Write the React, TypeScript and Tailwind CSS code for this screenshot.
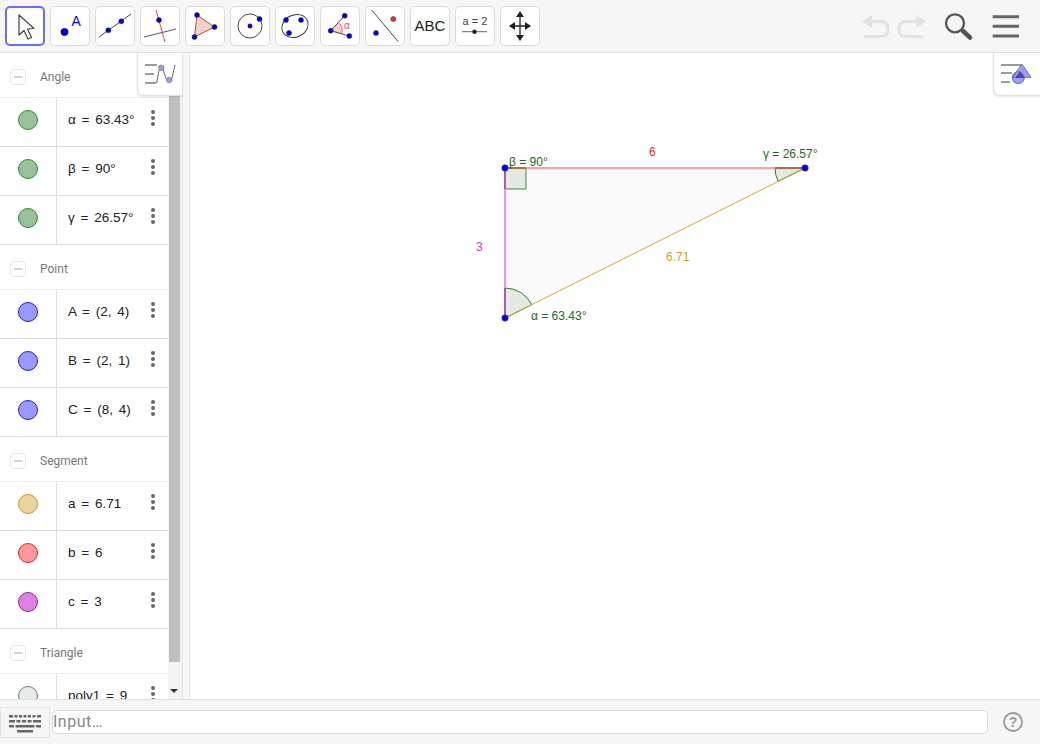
import type { ReactNode } from "react"

const BLUE = "#0000e6"

function Dot({ x, y, r = 2.5, fill = BLUE }: { x: number; y: number; r?: number; fill?: string }) {
  return <circle cx={x} cy={y} r={r} fill={fill} stroke="#222" strokeWidth="0.5" />
}

const tools: ReactNode[] = [
  <path key="move" d="M14 9 L14 29 L19 24.5 L23 33 L26.5 31.5 L22.5 23 L29 22.5 Z" fill="#fff" stroke="#444" strokeWidth="1.2" strokeLinejoin="round" />,
  <g key="point">
    <Dot x={14.5} y={26} r={3.7} />
    <text x={21.5} y={19.5} fill="#0000ff" fontSize="14" fontFamily="Liberation Sans, sans-serif">A</text>
  </g>,
  <g key="line">
    <path d="M4 31 L36 8" stroke="#333" strokeWidth="0.9" />
    <Dot x={13.3} y={24.3} />
    <Dot x={26.3} y={15.3} />
  </g>,
  <g key="perp">
    <path d="M4 31 L36 23" stroke="#444" strokeWidth="0.9" />
    <path d="M16 4 L25 36" stroke="#f03030" strokeWidth="0.9" />
    <Dot x={19} y={14} />
  </g>,
  <g key="polygon">
    <path d="M12 9 L29.5 21 L9.5 31 Z" fill="#f2d0c6" stroke="#b4532a" strokeWidth="1" />
    <Dot x={12} y={9} />
    <Dot x={29.5} y={21} />
    <Dot x={9.5} y={31} />
  </g>,
  <g key="circle">
    <circle cx="20" cy="20" r="12" fill="none" stroke="#333" strokeWidth="0.9" />
    <Dot x={20} y={20} r={2.2} />
    <Dot x={29.5} y={13} />
  </g>,
  <g key="conic">
    <ellipse cx="20" cy="20" rx="13.500" ry="11" fill="none" stroke="#333" strokeWidth="0.9" transform="rotate(-25 20 20)" />
    <Dot x={11} y={14} />
    <Dot x={26} y={14} />
    <Dot x={14} y={27} />
  </g>,
  <g key="angle">
    <path d="M10.700 24.700 L18.500 16.500 A11 11 0 0 1 21.700 27.800 Z" fill="#f6cfc8" stroke="none" />
    <path d="M10.700 24.700 L24.700 9.700 M10.700 24.700 L29.300 30" stroke="#333" strokeWidth="0.9" />
    <path d="M18.500 16.500 A11 11 0 0 1 21.700 27.800" fill="none" stroke="#e85050" strokeWidth="0.8" />
    <Dot x={10.7} y={24.7} />
    <Dot x={24.7} y={9.7} />
    <Dot x={29.3} y={30} />
    <text x={24} y={23} fill="#e85050" fontSize="10" fontFamily="Liberation Sans, sans-serif">α</text>
  </g>,
  <g key="reflect">
    <path d="M6.700 4 L33.300 35.700" stroke="#333" strokeWidth="0.9" />
    <Dot x={11} y={27} />
    <Dot x={28.3} y={13} fill="#f03030" />
  </g>,
  <text key="abc" x="20" y="25" textAnchor="middle" fill="#222" fontSize="15" fontFamily="Liberation Sans, sans-serif">ABC</text>,
  <g key="slider">
    <text x="20" y="19" textAnchor="middle" fill="#444" fontSize="11" fontFamily="Liberation Sans, sans-serif">a = 2</text>
    <path d="M7 25.700 L32 25.700" stroke="#666" strokeWidth="1" />
    <circle cx="19.500" cy="25.700" r="2.200" fill="#222" />
  </g>,
  <g key="pan" fill="#222">
    <path d="M20 10 L20 30 M10 20 L30 20" stroke="#222" strokeWidth="1.3" />
    <path d="M20 5 L24 11 L16 11 Z M20 35 L24 29 L16 29 Z M9 20 L15 16 L15 24 Z M31 20 L25 16 L25 24 Z" />
  </g>,
]

const groups = [
  {
    name: "Angle",
    rows: [
      { label: "α = 63.43°", fill: "#99c199", stroke: "#2e8b2e" },
      { label: "β = 90°", fill: "#99c199", stroke: "#2e8b2e" },
      { label: "γ = 26.57°", fill: "#99c199", stroke: "#2e8b2e" },
    ],
  },
  {
    name: "Point",
    rows: [
      { label: "A = (2, 4)", fill: "#9999ff", stroke: "#2222cc" },
      { label: "B = (2, 1)", fill: "#9999ff", stroke: "#2222cc" },
      { label: "C = (8, 4)", fill: "#9999ff", stroke: "#2222cc" },
    ],
  },
  {
    name: "Segment",
    rows: [
      { label: "a = 6.71", fill: "#e8d59b", stroke: "#c99a20" },
      { label: "b = 6", fill: "#ff9999", stroke: "#ee2222" },
      { label: "c = 3", fill: "#e080e0", stroke: "#8e2a8e" },
    ],
  },
  {
    name: "Triangle",
    rows: [{ label: "poly1 = 9", fill: "#e8ece8", stroke: "#777" }],
  },
]

function ToolButton({ children, active }: { children: ReactNode; active?: boolean }) {
  return (
    <div className={active ? "h-10 w-10 shrink-0 rounded-[5px] border-2 border-[#6a6cff] bg-white" : "h-10 w-10 shrink-0 rounded-[5px] border border-[#dcdcdc] bg-white"}>
      <svg viewBox="0 0 40 40" className={active ? "-m-[2px] h-10 w-10" : "-m-px h-10 w-10"}>{children}</svg>
    </div>
  )
}

function Row({ label, fill, stroke }: { label: string; fill: string; stroke: string }) {
  return (
    <div className="flex h-[49px] shrink-0 border-b border-[#dedede]">
      <div className="flex w-[57px] shrink-0 items-center justify-center border-r border-[#dedede] pb-[4px]">
        <div className="h-5 w-5 rounded-full border" style={{ background: fill, borderColor: stroke }} />
      </div>
      <div className="flex flex-1 items-center justify-between pb-[4px] pl-[11px] pr-[13px] font-['Liberation_Sans',sans-serif] text-[13.5px] text-[#222] [word-spacing:2px]">
        <span className="whitespace-nowrap">{label}</span>
        <div className="-mt-[5px] flex flex-col gap-[2px]">
          <span className="h-[4px] w-[4px] rounded-full bg-[#666]" />
          <span className="h-[4px] w-[4px] rounded-full bg-[#666]" />
          <span className="h-[4px] w-[4px] rounded-full bg-[#666]" />
        </div>
      </div>
    </div>
  )
}

function Group({ name, rows }: { name: string; rows: { label: string; fill: string; stroke: string }[] }) {
  return (
    <div>
      <div className="flex h-[45px] items-center border-b border-[#ececec] pl-[10px] pt-[4px]">
        <div className="flex h-[16px] w-[16px] items-center justify-center rounded-[3px] border border-[#e8e8e8]">
          <span className="h-[2px] w-[8px] bg-[#cfcfcf]" />
        </div>
        <span className="ml-[14px] font-['Roboto',sans-serif] text-[12px] text-[#777]">{name}</span>
      </div>
      {rows.map((r) => (
        <Row key={r.label} {...r} />
      ))}
    </div>
  )
}

function Graphics() {
  return (
    <svg width="850" height="646" viewBox="190 53 850 646" className="block" fontFamily="Liberation Sans, sans-serif" fontSize="12">
      <path d="M505 168 L805 168 L505 318 Z" fill="#fafafa" />
      <path d="M505 168 H526 V189 H505 Z" fill="#e4e9e3" stroke="#3d8b3d" strokeWidth="1" />
      <path d="M505 318 L505 288 A30 30 0 0 1 531.8 304.6 Z" fill="#e4e9e3" stroke="#2e7d32" strokeWidth="1" />
      <path d="M805 168 L775 168 A30 30 0 0 0 778.2 181.4 Z" fill="#e4e9e3" stroke="#2e7d32" strokeWidth="1" />
      <path d="M505 168 H805" stroke="#ff7f7f" strokeWidth="1.6" />
      <path d="M505 168 V318" stroke="#e080e0" strokeWidth="1.6" />
      <path d="M505 168 V189 M505 288 V318" stroke="#a34fa3" strokeWidth="1.6" />
      <path d="M509 168 H526 M775 168 H805" stroke="#a5603a" strokeWidth="1.4" />
      <path d="M505 318 L805 168" stroke="#d4a72c" strokeWidth="1" />
      <circle cx="505" cy="168" r="3.200" fill="#0000ff" stroke="#444" strokeWidth="0.7" />
      <circle cx="505" cy="318" r="3.200" fill="#0000ff" stroke="#444" strokeWidth="0.7" />
      <circle cx="805" cy="168" r="3.200" fill="#0000ff" stroke="#444" strokeWidth="0.7" />
      <text x="509" y="166" fill="#1a6b1a">β = 90°</text>
      <text x="763" y="158" fill="#1a6b1a">γ = 26.57°</text>
      <text x="531" y="320" fill="#1a6b1a">α = 63.43°</text>
      <text x="649" y="156" fill="#ff2020">6</text>
      <text x="476" y="251" fill="#c040c0">3</text>
      <text x="666" y="261" fill="#cf9f20">6.71</text>
    </svg>
  )
}

export default function App() {
  return (
    <div className="relative flex h-[744px] w-[1040px] flex-col overflow-hidden bg-white">
      {/* Toolbar */}
      <div className="flex h-[53px] shrink-0 items-start border-b border-[#e0e0e0] bg-[#f6f6f6] pl-[5px] pt-[6px]">
        <div className="flex gap-[5px]">
          {tools.map((t, i) => (
            <ToolButton key={i} active={i === 0}>{t}</ToolButton>
          ))}
        </div>
        <svg width="170" height="40" viewBox="860 6 170 40" className="ml-auto mr-[10px] shrink-0">
          <path d="M862 21.500 L872 15 L872 28 Z" fill="#e2e2e2" />
          <path d="M870 21.500 H881 Q888 21.500 888 29 Q888 36.500 881 36.500 H864" stroke="#e2e2e2" strokeWidth="3" fill="none" />
          <path d="M926 21.500 L916 15 L916 28 Z" fill="#e2e2e2" />
          <path d="M918 21.500 H906 Q899 21.500 899 29 Q899 36.500 906 36.500 H923" stroke="#e2e2e2" strokeWidth="3" fill="none" />
          <circle cx="955" cy="23.300" r="9" fill="none" stroke="#555" strokeWidth="2.300" />
          <path d="M963 31 L970 37.500" stroke="#555" strokeWidth="4.500" strokeLinecap="round" />
          <path d="M992.700 16.700 H1019 M992.700 26.300 H1019 M992.700 36 H1019" stroke="#666" strokeWidth="3" />
        </svg>
      </div>

      <div className="flex min-h-0 flex-1">
        {/* Algebra view */}
        <div className="w-[168px] shrink-0 overflow-hidden">
          {groups.map((g) => (
            <Group key={g.name} {...g} />
          ))}
        </div>
        {/* Scrollbar */}
        <div className="flex w-[14px] shrink-0 flex-col bg-[#f4f4f4]">
          <div className="ml-px h-[609px] w-[11px] bg-[#bfbfbf]" />
          <div className="flex flex-1 items-end justify-center pb-[5px]">
            <span className="mb-[1px] mr-[2px] h-0 w-0 border-x-[4px] border-t-[4px] border-x-transparent border-t-[#333]" />
          </div>
        </div>
        {/* Splitter */}
        <div className="w-[8px] shrink-0 border-x border-[#e4e4e4] bg-[#f8f8f8]" />
        {/* Graphics view */}
        <div className="min-w-0 flex-1">
          <Graphics />
        </div>
      </div>

      {/* Input bar */}
      <div className="flex h-[45px] shrink-0 items-center border-t border-[#e0e0e0] bg-[#f6f6f6]">
        <div className="flex h-[31px] w-[50px] shrink-0 items-center justify-center border border-[#e4e4e4]">
          <svg width="34" height="24" viewBox="0 -2 34 24" fill="#666">
            <path d="M1 3h4v2.500H1zM6.500 3h3v2.500h-3zM11 3h3v2.500h-3zM15.500 3h3v2.500h-3zM20 3h3v2.500h-3zM24.500 3h3v2.500h-3zM29 3h4v2.500h-4z" />
            <path d="M1 8h6v2.500H1zM8.500 8h4v2.500h-4zM14 8h4v2.500h-4zM19.500 8h4v2.500h-4zM25 8h8v2.500h-8z" />
            <path d="M1 13h5v2.500H1zM7.500 13h19v2.500h-19zM28 13h5v2.500h-5z" />
            <path d="M9 18h16v2.500H9z" />
          </svg>
        </div>
        <div className="ml-[2px] flex h-[24px] w-[936px] shrink-0 items-center rounded-[5px] border border-[#dcdcdc] bg-white font-['Roboto',sans-serif] text-[16px] tracking-[0.5px] text-[#888]">
          Input…
        </div>
        <svg width="22" height="22" viewBox="0 0 22 22" className="ml-[14px] shrink-0">
          <circle cx="11" cy="11" r="9" fill="none" stroke="#999" strokeWidth="1.800" />
          <text x="11" y="16" textAnchor="middle" fill="#999" fontSize="14" fontWeight="700" fontFamily="Liberation Sans, sans-serif">?</text>
        </svg>
      </div>

      {/* Style bar toggles */}
      <div className="absolute left-[137px] top-[53px] flex h-[43px] w-[46px] items-center justify-center rounded-bl-[6px] border-b border-l border-r border-[#e0e0e0] bg-white shadow-[0_1px_2px_rgba(0,0,0,0.1)]">
        <svg width="34" height="28" viewBox="0 0 34 28">
          <path d="M2 4h12v2H2zM2 13h9v2H2zM2 22h11v2H2z" fill="#9a9a9a" />
          <path d="M13.700 23 C15.500 12 16.500 7 18.300 7 C21 7 22 22 26.300 22 C29 22 30 12 32 5" fill="none" stroke="#666" strokeWidth="1" />
          <circle cx="18.300" cy="7.700" r="2.800" fill="#9a9aee" stroke="#777" strokeWidth="0.6" />
          <circle cx="26.300" cy="20" r="2.800" fill="#9a9aee" stroke="#777" strokeWidth="0.6" />
        </svg>
      </div>
      <div className="absolute left-[993px] top-[53px] flex h-[43px] w-[47px] items-center justify-center rounded-bl-[6px] border-b border-l border-[#e0e0e0] bg-white shadow-[0_1px_2px_rgba(0,0,0,0.1)]">
        <svg width="34" height="28" viewBox="0 0 34 28">
          <path d="M1 4h20v2H1zM1 12h11v2H1zM1 21h9v2H1z" fill="#9a9a9a" />
          <circle cx="18.300" cy="17.700" r="6" fill="#9a9aff" stroke="#777" strokeWidth="0.7" />
          <path d="M22 4 L31 17.300 H12.500 Z" fill="#9a9aff" stroke="#555" strokeWidth="0.7" />
          <circle cx="18.300" cy="17.700" r="6" fill="none" stroke="#777" strokeWidth="0.7" />
          <path d="M20 11.700 L24 17.300 H16 Z" fill="#4a4ae0" stroke="#333" strokeWidth="0.6" />
        </svg>
      </div>
    </div>
  )
}
